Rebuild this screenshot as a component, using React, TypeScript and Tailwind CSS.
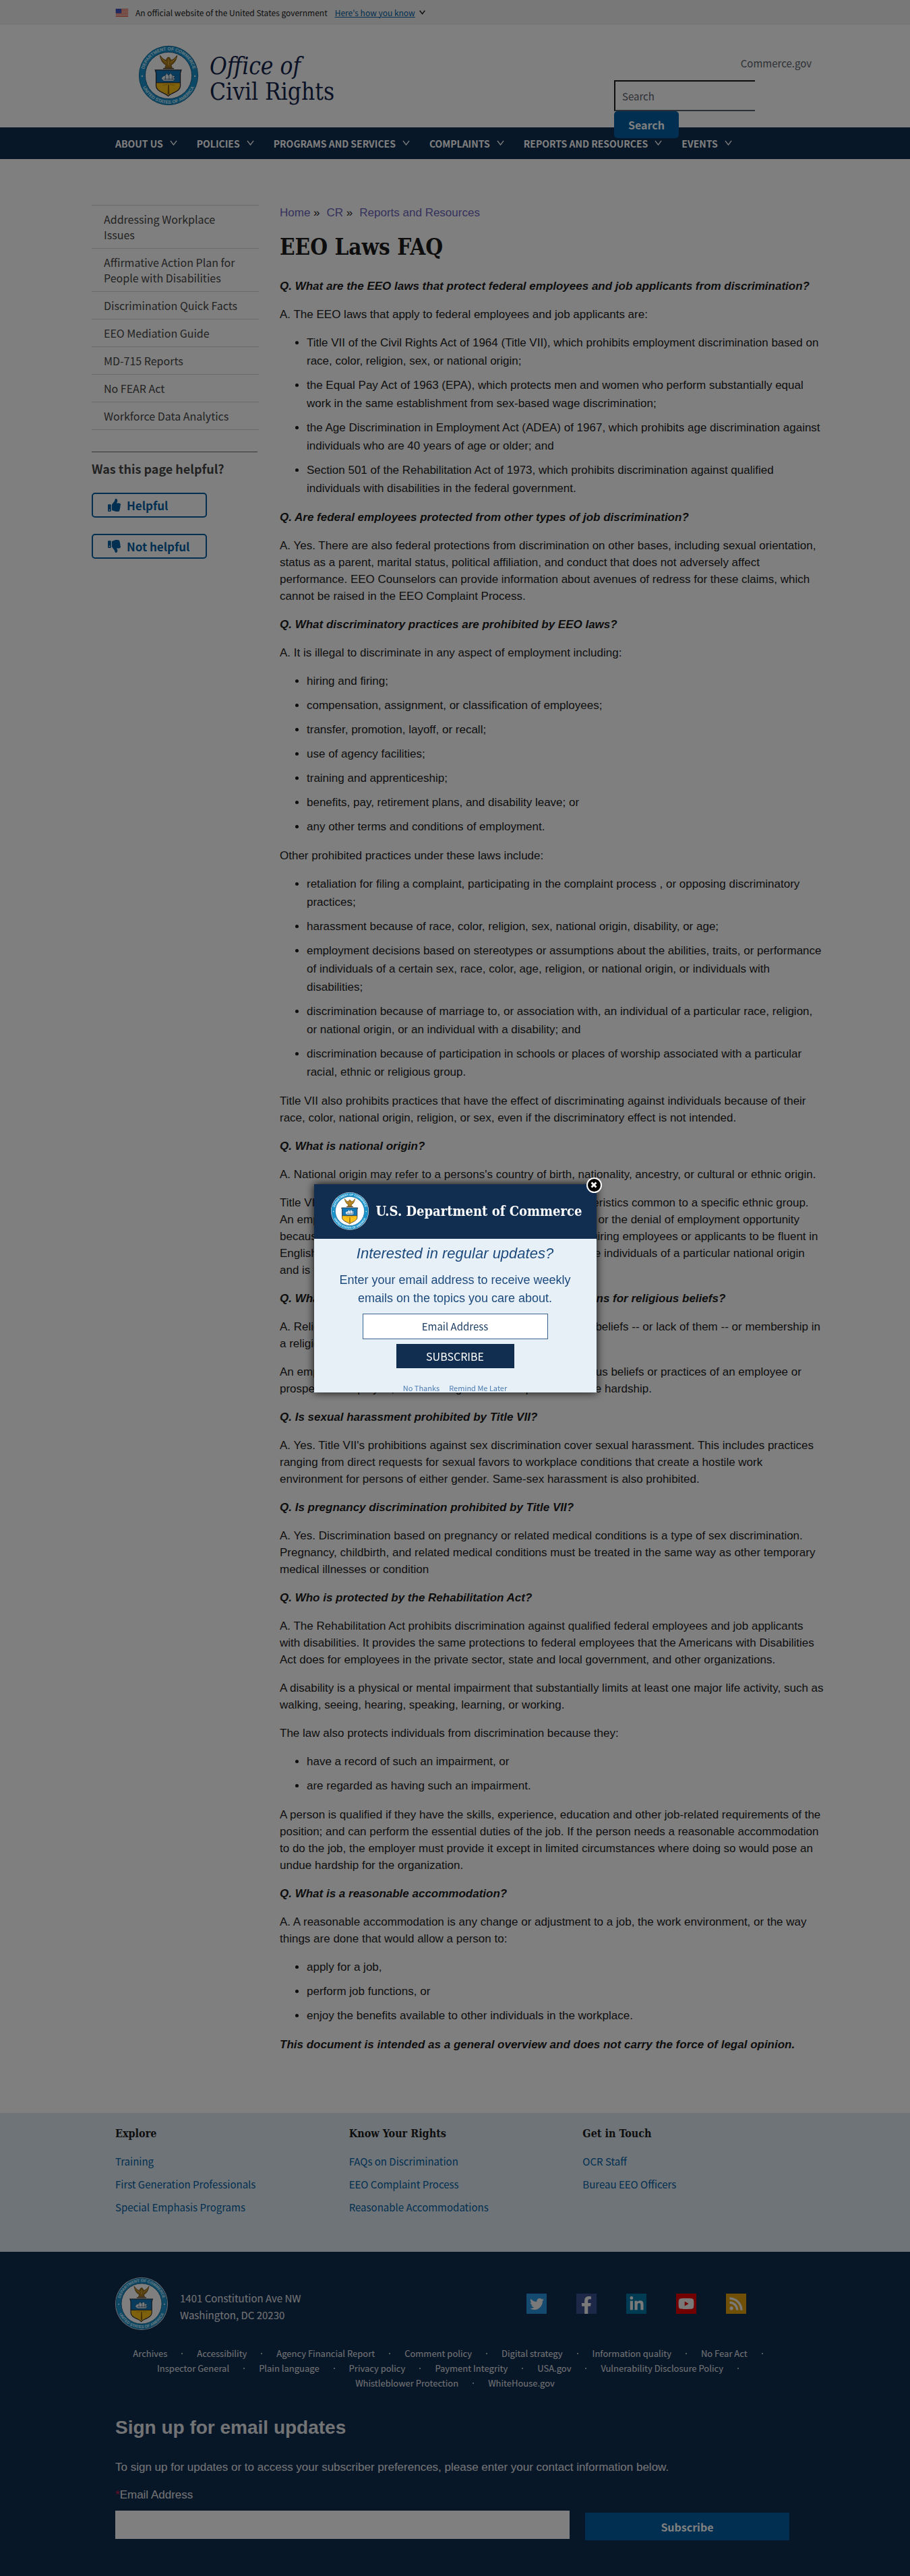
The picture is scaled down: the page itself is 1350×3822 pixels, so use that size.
import { useId, type ReactNode } from "react";
import {
  FaFacebookF,
  FaLinkedinIn,
  FaRss,
  FaThumbsDown,
  FaThumbsUp,
  FaTwitter,
  FaYoutube,
} from "react-icons/fa";

const navItems = [
  "About us",
  "Policies",
  "Programs and Services",
  "Complaints",
  "Reports and Resources",
  "Events",
];

const sideLinks = [
  "Addressing Workplace Issues",
  "Affirmative Action Plan for People with Disabilities",
  "Discrimination Quick Facts",
  "EEO Mediation Guide",
  "MD-715 Reports",
  "No FEAR Act",
  "Workforce Data Analytics",
];

const footerColumns = [
  {
    title: "Explore",
    links: ["Training", "First Generation Professionals", "Special Emphasis Programs"],
  },
  {
    title: "Know Your Rights",
    links: ["FAQs on Discrimination", "EEO Complaint Process", "Reasonable Accommodations"],
  },
  { title: "Get in Touch", links: ["OCR Staff", "Bureau EEO Officers"] },
];

const policyLinks = [
  "Archives",
  "Accessibility",
  "Agency Financial Report",
  "Comment policy",
  "Digital strategy",
  "Information quality",
  "No Fear Act",
  "Inspector General",
  "Plain language",
  "Privacy policy",
  "Payment Integrity",
  "USA.gov",
  "Vulnerability Disclosure Policy",
  "Whistleblower Protection",
  "WhiteHouse.gov",
];

function Seal({ className }: { className: string }) {
  const id = useId();
  return (
    <svg viewBox="0 0 100 100" className={className} role="img" aria-label="Department of Commerce seal">
      <defs>
        <path id={`${id}top`} d="M8.5 50a41.5 41.5 0 0 1 83 0" />
        <path id={`${id}bottom`} d="M3.5 50a46.5 46.5 0 0 0 93 0" />
      </defs>
      <circle cx="50" cy="50" r="50" fill="#fff" />
      <circle cx="50" cy="50" r="48.5" fill="#1b93cc" stroke="#0b5f8f" strokeWidth="1" />
      <circle cx="50" cy="50" r="38.5" fill="#fff" stroke="#0b4f7c" strokeWidth="1" />
      <g fill="#d4effc" fontFamily="Liberation Sans, sans-serif" fontWeight="700" fontSize="7.4" textAnchor="middle">
        <text>
          <textPath href={`#${id}top`} startOffset="50%">DEPARTMENT OF COMMERCE</textPath>
        </text>
        <text>
          <textPath href={`#${id}bottom`} startOffset="50%">UNITED STATES OF AMERICA</textPath>
        </text>
      </g>
      <g fill="#e6f6ff">
        <circle cx="6.5" cy="51" r="1.3" />
        <circle cx="93.5" cy="51" r="1.3" />
      </g>
      <path
        d="M36 17c1 7 4 13 10 16l-2 4h12l-2-4c6-3 9-9 10-16-3 4-6 7-10 8-1-3-2-5-4-5s-3 2-4 5c-4-1-7-4-10-8z"
        fill="#a8781c"
        stroke="#5d3f0c"
        strokeWidth="0.9"
      />
      <path d="M38 21c3 4 6 6 9 8M62 21c-3 4-6 6-9 8M50 24v9" stroke="#f0c65a" strokeWidth="1" fill="none" />
      <path d="M41 38.500h18" stroke="#4a3414" strokeWidth="1.6" />
      <path d="M28 41h43l-1.500 5v21c0 6-7 10-12 12-3.500 1.500-6 3-8 5-2-2-4.500-3.500-8-5-5-2-12-6-12-12V46z" fill="#fbc21b" />
      <path d="M28 41h43l-1.500 5v16h-40V46z" fill="#1278b8" />
      <path
        d="M28 41h43l-1.500 5v21c0 6-7 10-12 12-3.500 1.500-6 3-8 5-2-2-4.500-3.500-8-5-5-2-12-6-12-12V46z"
        fill="none"
        stroke="#2a2a33"
        strokeWidth="1.4"
      />
      <path d="M30 62h39" stroke="#2a2a33" strokeWidth="1.200" />
      <path d="M38 55l3-4 4-1 2-4 3 4 4-4 2 4 5 1-3 3 3 1-3 4H42z" fill="#eaf4fb" stroke="#16405e" strokeWidth="0.6" />
      <path d="M42 56h17M45 51v6M51 50v7M56 51v6" stroke="#16405e" strokeWidth="0.8" />
      <path d="M48.500 81l.6-16h1.800l.6 16z" fill="#8a6412" />
      <path d="M40 66l8-1M60 66l-8-1" stroke="#c98f10" strokeWidth="1" />
    </svg>
  );
}

function Flag() {
  return (
    <svg viewBox="0 0 20 13" className="h-3 w-5 shrink-0" aria-hidden="true">
      <rect width="20" height="13" fill="#fff" />
      <path d="M0 .5h20M0 2.500h20M0 4.500h20M0 6.500h20M0 8.500h20M0 10.500h20M0 12.500h20" stroke="#db3e1f" />
      <rect width="9" height="7" fill="#1e33b1" />
      <path d="M1 1.500h7M1 3.500h7M1 5.500h7" stroke="#a9b3ee" strokeDasharray="1 1" />
    </svg>
  );
}

function Chevron({ className }: { className: string }) {
  return (
    <svg viewBox="0 0 12 9" className={className} fill="none" stroke="currentColor" aria-hidden="true">
      <path d="M1 1l5 6.500L11 1" />
    </svg>
  );
}

function Q({ children }: { children: ReactNode }) {
  return <p className="font-bold italic">{children}</p>;
}

function List({ items }: { items: string[] }) {
  return (
    <ul className="-mt-px list-disc pl-10 leading-[27px]">
      {items.map((item) => (
        <li key={item} className="mb-[9px] last:mb-0">
          {item}
        </li>
      ))}
    </ul>
  );
}

function GovBanner() {
  return (
    <div className="bg-[#f0f0f0]">
      <div className="mx-auto flex h-[37px] max-w-[1008px] items-center gap-[10px] text-xs">
        <Flag />
        <p className="text-[#1b1b1b]">An official website of the United States government</p>
        <button className="ml-px flex items-center gap-[6px] text-[#005ea2]">
          <span className="underline">Here&apos;s how you know</span>
          <Chevron className="w-[9px] stroke-2 text-[#1b1b1b]" />
        </button>
      </div>
    </div>
  );
}

function Header() {
  return (
    <header>
      <div className="mx-auto flex max-w-[1078px] justify-between">
        <a href="#home" className="flex items-start gap-4 pt-[30px] pl-[69px]">
          <Seal className="size-[90px]" />
          <span className="pt-3 font-['DejaVu_Serif_Condensed','DejaVu_Serif',serif] text-[35px] leading-[38px] text-[#12234b]">
            <span className="block italic">Office of</span>
            <span className="block">Civil Rights</span>
          </span>
        </a>
        <div className="w-[303px] pt-[45px] pr-[10px]">
          <a href="#commerce" className="block text-right text-[15px] leading-6 text-[#5b616b]">
            Commerce.gov
          </a>
          <form className="mt-[13px]">
            <input
              type="search"
              aria-label="Search"
              placeholder="Search"
              className="block h-[46px] w-[209px] border-t-2 border-b-2 border-l-2 border-t-[#1b1b1b] border-b-[#5b616b] border-l-[#1b1b1b] px-[10px] text-[15px] placeholder:text-[#5b616b]"
            />
            <button
              type="button"
              className="relative z-10 -mb-4 block h-10 w-24 rounded-[5px] bg-[#005ea2] text-base font-bold text-white"
            >
              Search
            </button>
          </form>
        </div>
      </div>
      <nav className="bg-[#112e51]">
        <ul className="mx-auto flex h-[47px] max-w-[1008px] items-center gap-[29px] text-sm font-bold text-white uppercase">
          {navItems.map((item) => (
            <li key={item}>
              <button className="flex items-center gap-[10px] uppercase">
                {item}
                <Chevron className="w-[11px] stroke-[1.500]" />
              </button>
            </li>
          ))}
        </ul>
      </nav>
    </header>
  );
}

function Sidebar() {
  return (
    <aside className="w-[248px] shrink-0 text-[#454545]">
      <ul className="border-b border-[#d6d7d9]">
        {sideLinks.map((link) => (
          <li key={link} className="border-t border-[#d6d7d9]">
            <a href="#page" className="block pt-[9px] pr-6 pb-2 pl-[18px] text-base leading-[23px]">
              {link}
            </a>
          </li>
        ))}
      </ul>
      <hr className="mt-8 w-[246px] border-[#6b6b6b]" />
      <h2 className="mt-3 text-lg leading-6 font-bold">Was this page helpful?</h2>
      <div className="mt-6 flex flex-col items-start gap-6 text-[17px] font-bold text-[#005ea2]">
        <button className="flex h-[37px] w-[171px] items-center gap-[9px] rounded-[5px] border-2 border-[#005ea2] pl-[22px]">
          <FaThumbsUp size={19} />
          Helpful
        </button>
        <button className="flex h-[37px] w-[171px] items-center gap-[9px] rounded-[5px] border-2 border-[#005ea2] pl-[22px]">
          <FaThumbsDown size={19} />
          Not helpful
        </button>
      </div>
    </aside>
  );
}

function Article() {
  return (
    <main className="-mr-[10px] min-w-0 flex-1 font-['Liberation_Sans',Arial,sans-serif] text-[17px] text-[#1b1b1b]">
      <nav aria-label="Breadcrumb" className="flex h-6 items-center gap-[10px]">
        <span>
          <a href="#home" className="text-[#6b64b8]">Home</a> »
        </span>
        <span>
          <a href="#cr" className="text-[#6b64b8]">CR</a> »
        </span>
        <a href="#reports" className="text-[#6b64b8]">Reports and Resources</a>
      </nav>
      <h1 className="mt-[18px] font-['DejaVu_Serif_Condensed','DejaVu_Serif',serif] text-[33px] leading-[42px] font-bold">
        EEO Laws FAQ
      </h1>
      <div className="mt-6 space-y-[17px] leading-[25px]">
        <Q>Q. What are the EEO laws that protect federal employees and job applicants from discrimination?</Q>
        <p>A. The EEO laws that apply to federal employees and job applicants are:</p>
        <List
          items={[
            "Title VII of the Civil Rights Act of 1964 (Title VII), which prohibits employment discrimination based on race, color, religion, sex, or national origin;",
            "the Equal Pay Act of 1963 (EPA), which protects men and women who perform substantially equal work in the same establishment from sex-based wage discrimination;",
            "the Age Discrimination in Employment Act (ADEA) of 1967, which prohibits age discrimination against individuals who are 40 years of age or older; and",
            "Section 501 of the Rehabilitation Act of 1973, which prohibits discrimination against qualified individuals with disabilities in the federal government.",
          ]}
        />
        <Q>Q. Are federal employees protected from other types of job discrimination?</Q>
        <p>
          A. Yes. There are also federal protections from discrimination on other bases, including sexual orientation,
          status as a parent, marital status, political affiliation, and conduct that does not adversely affect
          performance. EEO Counselors can provide information about avenues of redress for these claims, which cannot be
          raised in the EEO Complaint Process.
        </p>
        <Q>Q. What discriminatory practices are prohibited by EEO laws?</Q>
        <p>A. It is illegal to discriminate in any aspect of employment including:</p>
        <List
          items={[
            "hiring and firing;",
            "compensation, assignment, or classification of employees;",
            "transfer, promotion, layoff, or recall;",
            "use of agency facilities;",
            "training and apprenticeship;",
            "benefits, pay, retirement plans, and disability leave; or",
            "any other terms and conditions of employment.",
          ]}
        />
        <p>Other prohibited practices under these laws include:</p>
        <List
          items={[
            "retaliation for filing a complaint, participating in the complaint process , or opposing discriminatory practices;",
            "harassment because of race, color, religion, sex, national origin, disability, or age;",
            "employment decisions based on stereotypes or assumptions about the abilities, traits, or performance of individuals of a certain sex, race, color, age, religion, or national origin, or individuals with disabilities;",
            "discrimination because of marriage to, or association with, an individual of a particular race, religion, or national origin, or an individual with a disability; and",
            "discrimination because of participation in schools or places of worship associated with a particular racial, ethnic or religious group.",
          ]}
        />
        <p>
          Title VII also prohibits practices that have the effect of discriminating against individuals because of their
          race, color, national origin, religion, or sex, even if the discriminatory effect is not intended.
        </p>
        <Q>Q. What is national origin?</Q>
        <p>
          A. National origin may refer to a persons&apos;s country of birth, nationality, ancestry, or cultural or ethnic
          origin.
        </p>
        <p>
          Title VII prohibits discrimination based on the physical characteristics common to a specific ethnic group. An
          employee may not be subjected to any form of harassment or the denial of employment opportunity because of
          birthplace, language, culture, or accent. A rule requiring employees or applicants to be fluent in English may
          violate Title VII if it is expressly adopted to exclude individuals of a particular national origin and is not
          related to job performance.
        </p>
        <Q>Q. What are the protections and necessary accommodations for religious beliefs?</Q>
        <p>
          A. Religious discrimination is treating people differently due to beliefs -- or lack of them -- or membership
          in a religious group.
        </p>
        <p>
          An employer is obliged to reasonably accommodate the religious beliefs or practices of an employee or
          prospective employee, unless doing so would impose an undue hardship.
        </p>
        <Q>Q. Is sexual harassment prohibited by Title VII?</Q>
        <p>
          A. Yes. Title VII&apos;s prohibitions against sex discrimination cover sexual harassment. This includes
          practices ranging from direct requests for sexual favors to workplace conditions that create a hostile work
          environment for persons of either gender. Same-sex harassment is also prohibited.
        </p>
        <Q>Q. Is pregnancy discrimination prohibited by Title VII?</Q>
        <p>
          A. Yes. Discrimination based on pregnancy or related medical conditions is a type of sex discrimination.
          Pregnancy, childbirth, and related medical conditions must be treated in the same way as other temporary
          medical illnesses or condition
        </p>
        <Q>Q. Who is protected by the Rehabilitation Act?</Q>
        <p>
          A. The Rehabilitation Act prohibits discrimination against qualified federal employees and job applicants with
          disabilities. It provides the same protections to federal employees that the Americans with Disabilities Act
          does for employees in the private sector, state and local government, and other organizations.
        </p>
        <p>
          A disability is a physical or mental impairment that substantially limits at least one major life activity,
          such as walking, seeing, hearing, speaking, learning, or working.
        </p>
        <p>The law also protects individuals from discrimination because they:</p>
        <List items={["have a record of such an impairment, or", "are regarded as having such an impairment."]} />
        <p>
          A person is qualified if they have the skills, experience, education and other job-related requirements of the
          position; and can perform the essential duties of the job. If the person needs a reasonable accommodation to
          do the job, the employer must provide it except in limited circumstances where doing so would pose an undue
          hardship for the organization.
        </p>
        <Q>Q. What is a reasonable accommodation?</Q>
        <p>
          A. A reasonable accommodation is any change or adjustment to a job, the work environment, or the way things
          are done that would allow a person to:
        </p>
        <List
          items={[
            "apply for a job,",
            "perform job functions, or",
            "enjoy the benefits available to other individuals in the workplace.",
          ]}
        />
        <Q>This document is intended as a general overview and does not carry the force of legal opinion.</Q>
      </div>
    </main>
  );
}

function LinkColumns() {
  return (
    <section className="bg-[#dfe9f1]">
      <div className="mx-auto grid max-w-[1008px] grid-cols-3 gap-8 pt-[18px] pb-11">
        {footerColumns.map((column) => (
          <div key={column.title}>
            <h2 className="font-['DejaVu_Serif_Condensed','DejaVu_Serif',serif] text-base leading-[26px] font-bold text-[#1b1b1b]">
              {column.title}
            </h2>
            <ul className="mt-4 text-[15px] text-[#005ea2]">
              {column.links.map((link) => (
                <li key={link} className="h-[34px] leading-[24px]">
                  <a href="#link">{link}</a>
                </li>
              ))}
            </ul>
          </div>
        ))}
      </div>
    </section>
  );
}

function SocialLinks() {
  return (
    <ul className="flex gap-11 text-[#f3f3f3]">
      <li>
        <a href="#twitter" aria-label="Twitter" className="flex size-[30px] items-center justify-center bg-[#2a95e0]">
          <FaTwitter size={21} />
        </a>
      </li>
      <li>
        <a href="#facebook" aria-label="Facebook" className="flex size-[30px] items-end justify-center bg-[#3b4f8f]">
          <FaFacebookF size={26} />
        </a>
      </li>
      <li>
        <a href="#linkedin" aria-label="LinkedIn" className="flex size-[30px] items-center justify-center bg-[#0077a8]">
          <FaLinkedinIn size={23} />
        </a>
      </li>
      <li>
        <a href="#youtube" aria-label="YouTube" className="flex size-[30px] items-center justify-center bg-[#e60000]">
          <FaYoutube size={24} />
        </a>
      </li>
      <li>
        <a href="#rss" aria-label="RSS" className="flex size-[30px] items-center justify-center bg-[#e0a00c]">
          <FaRss size={22} />
        </a>
      </li>
    </ul>
  );
}

function Footer() {
  return (
    <footer className="bg-[#112e51] text-[#e4e7ea]">
      <div className="mx-auto max-w-[1008px] pt-[38px] pb-14">
        <div className="flex items-center justify-between pr-[72px]">
          <div className="flex items-center gap-[18px]">
            <Seal className="size-[78px]" />
            <address className="pt-2 text-[15px] leading-[25px] not-italic">
              1401 Constitution Ave NW
              <br />
              Washington, DC 20230
            </address>
          </div>
          <SocialLinks />
        </div>
        <ul className="mt-6 flex flex-wrap justify-center text-[13px] leading-[22px]">
          {policyLinks.map((link) => (
            <li
              key={link}
              className="flex items-center after:mx-[21px] after:size-[2px] after:rounded-full after:bg-current after:content-[''] last:after:hidden"
            >
              <a href="#policy">{link}</a>
            </li>
          ))}
        </ul>
        <form className="font-['Liberation_Sans',Arial,sans-serif] text-[17px]">
          <h2 className="mt-[37px] text-[28px] leading-9 font-bold">Sign up for email updates</h2>
          <p className="mt-[29px] leading-6">
            To sign up for updates or to access your subscriber preferences, please enter your contact information
            below.
          </p>
          <label htmlFor="signup-email" className="mt-[17px] block leading-6">
            <span className="text-[#d01c48]">*</span>Email Address
          </label>
          <div className="mt-[11px] flex items-end gap-[23px]">
            <input id="signup-email" type="email" className="h-[42px] w-[674px] bg-white px-3 text-[#1b1b1b]" />
            <button
              type="button"
              className="-mb-0.5 h-[41px] w-[303px] bg-[#005ea2] font-['Noto_Sans_CJK_JP',sans-serif] text-base font-bold text-white"
            >
              Subscribe
            </button>
          </div>
        </form>
      </div>
    </footer>
  );
}

function SubscribeDialog() {
  return (
    <div className="fixed inset-0 z-20 flex items-center justify-center bg-black/50">
      <div
        role="dialog"
        aria-label="Subscribe to updates"
        className="relative h-[309px] w-[419px] bg-[#e8f0f7] shadow-[0_0_12px_rgba(0,0,0,0.9)]"
      >
        <button
          aria-label="Close"
          className="absolute -top-[10px] -right-2 flex size-[23px] items-center justify-center rounded-full border-2 border-white bg-black"
        >
          <svg viewBox="0 0 10 10" className="size-[10px]" aria-hidden="true">
            <path d="M1.500 1.500l7 7M8.500 1.500l-7 7" stroke="#fff" strokeWidth="2.800" />
          </svg>
        </button>
        <div className="flex h-full flex-col items-center overflow-hidden font-['Liberation_Sans',Arial,sans-serif] text-[#1d4a7c]">
          <div className="flex h-[81px] w-full shrink-0 items-center gap-[11px] bg-[#112e51] pl-[25px]">
            <Seal className="size-[56px]" />
            <span className="font-['DejaVu_Serif_Condensed','DejaVu_Serif',serif] text-[20px] font-bold whitespace-nowrap text-white">
              U.S. Department of Commerce
            </span>
          </div>
          <h2 className="mt-2 text-[22px] leading-7 italic">Interested in regular updates?</h2>
          <p className="mt-3 w-[360px] text-center text-[18px] leading-[27px]">
            Enter your email address to receive weekly emails on the topics you care about.
          </p>
          <input
            type="email"
            aria-label="Email Address"
            placeholder="Email Address"
            className="mt-[9px] h-[38px] w-[275px] shrink-0 border border-[#3a6390] bg-white text-center font-['Noto_Sans_CJK_JP',sans-serif] text-[15px] placeholder:text-[#1d3f66]"
          />
          <button className="mt-[7px] h-9 w-[175px] shrink-0 bg-[#112e51] font-['Noto_Sans_CJK_JP',sans-serif] text-base text-white">
            SUBSCRIBE
          </button>
          <div className="mt-[23px] flex gap-[14px] font-['Noto_Sans_CJK_JP',sans-serif] text-[11px] leading-3 whitespace-nowrap text-[#4a7ab0]">
            <a href="#no">No Thanks</a>
            <a href="#later">Remind Me Later</a>
          </div>
        </div>
      </div>
    </div>
  );
}

export default function App() {
  return (
    <div className="bg-white font-['Noto_Sans_CJK_JP','Noto_Sans',sans-serif]">
      <GovBanner />
      <Header />
      <div className="mx-auto flex max-w-[1078px] items-start gap-[31px] pt-[68px] pb-[89px]">
        <Sidebar />
        <Article />
      </div>
      <LinkColumns />
      <Footer />
      <SubscribeDialog />
    </div>
  );
}
